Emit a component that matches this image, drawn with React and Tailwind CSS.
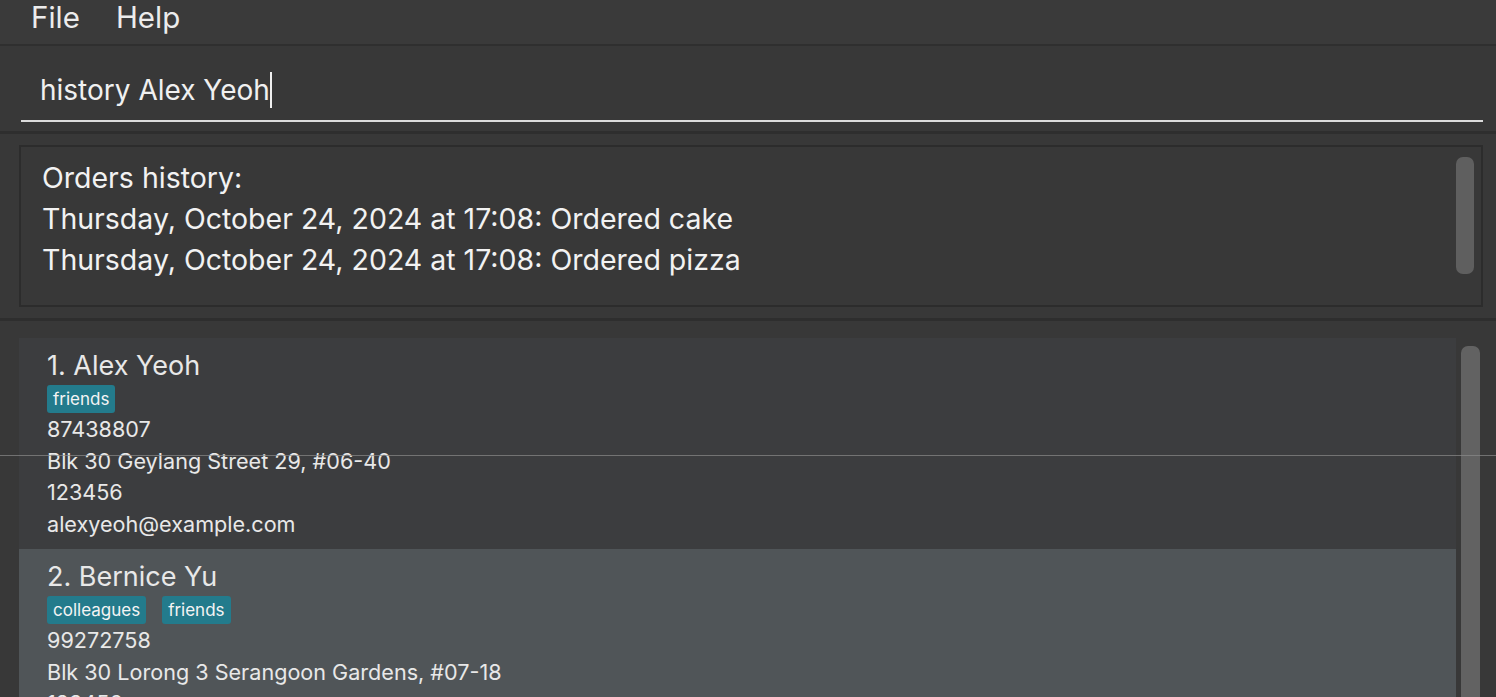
const orders = [
  'Thursday, October 24, 2024 at 17:08: Ordered cake',
  'Thursday, October 24, 2024 at 17:08: Ordered pizza',
];

const persons = [
  {
    id: 1,
    name: 'Alex Yeoh',
    tags: ['friends'],
    phone: '87438807',
    address: 'Blk 30 Geylang Street 29, #06-40',
    postal: '123456',
    email: 'alexyeoh@example.com',
  },
  {
    id: 2,
    name: 'Bernice Yu',
    tags: ['colleagues', 'friends'],
    phone: '99272758',
    address: 'Blk 30 Lorong 3 Serangoon Gardens, #07-18',
    postal: '123456',
    email: 'berniceyu@example.com',
  },
];

const PersonCard = ({ person, index }) => (
  <div
    className={`pl-[28px] pt-[11px] pb-[9px] text-[#e8e8e8] ${
      index % 2 === 0 ? 'bg-[#3c3d3f]' : 'bg-[#505558]'
    }`}
  >
    <div className="text-[27px] leading-[34px]">
      {person.id}. {person.name}
    </div>
    <div className="flex gap-[16px] mt-[2px]">
      {person.tags.map((tag) => (
        <span
          key={tag}
          className="bg-[#237b8c] text-[#f4f4f4] text-[17px] leading-[28px] px-[6px] rounded-[3px]"
        >
          {tag}
        </span>
      ))}
    </div>
    <div className="text-[21.6px] leading-[31.5px] mt-[1px]">
      <div>{person.phone}</div>
      <div>{person.address}</div>
      <div>{person.postal}</div>
      <div>{person.email}</div>
    </div>
  </div>
);

export default function App() {
  return (
    <div className="relative w-[1496px] h-[697px] overflow-hidden bg-[#383838] font-['Inter','Open_Sans',sans-serif]">
      {/* Menu bar */}
      <div className="h-[46px] bg-[#3a3a3a] border-b-2 border-[#2f2f2f] flex items-start gap-[36px] pl-[31px] pt-[1px] text-[29.5px] leading-[32px] text-[#ececec]">
        <span>File</span>
        <span>Help</span>
      </div>

      {/* Command box */}
      <div className="h-[85px] bg-[#383838] pl-[21px] pr-[13px] pt-[22px]">
        <div className="border-b-2 border-[#dcdcdc] h-[54px] pl-[19px] flex items-start">
          <span className="text-[28px] leading-[44px] text-[#f0f0f0]">history Alex Yeoh</span>
          <span className="w-[2px] h-[36px] mt-[4px] bg-[#f0f0f0]" />
        </div>
      </div>

      {/* Result display */}
      <div className="border-t-[3px] border-b-[3px] border-[#2e2e2e] bg-[#383838] pl-[19px] pr-[13px] py-[11px]">
        <div className="h-[162px] border-2 border-[#2c2c2c] flex justify-between pl-[21px] pr-[7px] pt-[10px]">
          <div className="text-[28.5px] leading-[41px] text-[#f2f2f2]">
            <div>Orders history:</div>
            {orders.map((o, i) => (
              <div key={i}>{o}</div>
            ))}
          </div>
          <div className="w-[18px] h-[117px] rounded-[7px] bg-[#5f5f5f]" />
        </div>
      </div>

      {/* Person list */}
      <div className="flex pl-[19px] pt-[17px] bg-[#383838]">
        <div className="w-[1437px]">
          {persons.map((p, i) => (
            <PersonCard key={p.id} person={p} index={i} />
          ))}
        </div>
        <div className="ml-[5px] mt-[8px] w-[19px] h-[400px] rounded-[7px] bg-[#626262]" />
      </div>

      {/* thin overlay line */}
      <div className="absolute left-0 right-0 top-[455px] h-px bg-[#8a8a8a]/70" />
    </div>
  );
}
